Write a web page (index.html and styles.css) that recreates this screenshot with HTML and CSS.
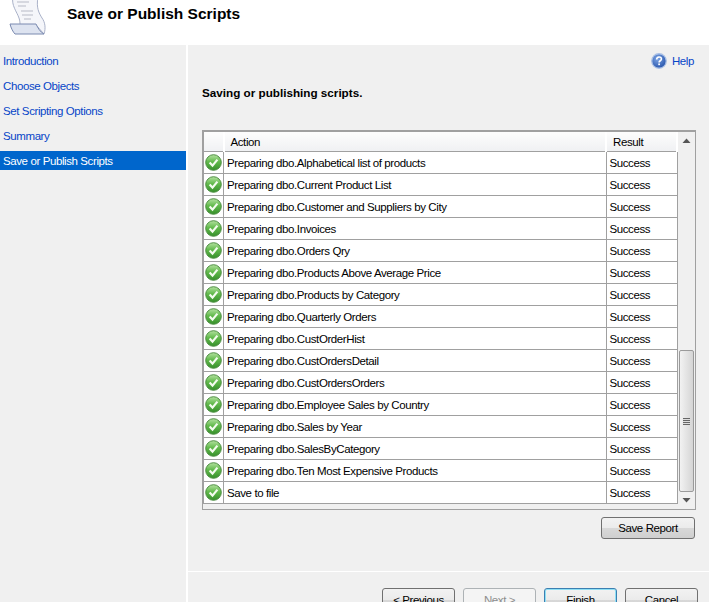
FILE: index.html
```html
<!DOCTYPE html>
<html lang="en">
<head>
  <meta charset="UTF-8">
  <title>Save or Publish Scripts</title>
  <link rel="stylesheet" href="styles.css">
</head>
<body>
  <svg class="defs" width="0" height="0">
    <defs>
      <linearGradient id="okFill" x1="0" y1="0" x2="0" y2="1">
        <stop offset="0" stop-color="#b4e2a0"/>
        <stop offset="0.45" stop-color="#62ba4c"/>
        <stop offset="1" stop-color="#358f2a"/>
      </linearGradient>
      <radialGradient id="helpFill" cx="0.4" cy="0.35" r="0.7">
        <stop offset="0" stop-color="#7ea6e6"/>
        <stop offset="1" stop-color="#2350a8"/>
      </radialGradient>
      <symbol id="ok" viewBox="0 0 17 17">
        <circle cx="8.5" cy="8.5" r="7.8" fill="url(#okFill)" stroke="#4f8f44"/>
        <path d="M4.6 8.6l2.9 3 4.9-6" fill="none" stroke="#f4fbef" stroke-width="2.2"/>
      </symbol>
    </defs>
  </svg>

  <div class="header">
    <svg class="header-icon" width="48" height="36" viewBox="0 0 48 36">
      <path d="M13 -3C11 5 17 12 19 18C20 21 20 23 20 25H36L44 34C46 28 45 22 42 18C39 13 36 8 38 -3Z" fill="#f5f6fa" stroke="#a9b1c8"/>
      <path d="M10 24H36C38 28 40 32 44 34H15C13 32 11 28 10 24Z" fill="#dde3f0" stroke="#7a8ab0"/>
      <path d="M17 2H29M18 6H26M21 11H33M22 15H33M24 19H31" stroke="#cbced8" stroke-width="1.3"/>
    </svg>
    <h1>Save or Publish Scripts</h1>
  </div>

  <div class="body">
    <ul class="nav">
      <li>Introduction</li>
      <li>Choose Objects</li>
      <li>Set Scripting Options</li>
      <li>Summary</li>
      <li class="selected">Save or Publish Scripts</li>
    </ul>

    <div class="main">
      <div class="help">
        <svg width="16" height="16" viewBox="0 0 15 15">
          <circle cx="7.5" cy="7.5" r="6.8" fill="url(#helpFill)" stroke="#a9c0e6" stroke-width="1.2"/>
          <path d="M5.3 6c0-3 4.5-3 4.5-.4 0 1.600-2.200 1.700-2.200 3.200" fill="none" stroke="#fff" stroke-width="1.500"/>
          <rect x="6.800" y="9.800" width="1.600" height="1.600" fill="#fff"/>
        </svg>
        <span>Help</span>
      </div>
      <h2>Saving or publishing scripts.</h2>

      <div class="grid">
        <div class="grid-table">
          <table>
            <thead>
              <tr><th class="col-icon"></th><th class="col-action">Action</th><th class="col-result">Result</th></tr>
            </thead>
            <tbody>
              <tr><td class="cell-icon"><svg width="17" height="17"><use href="#ok"/></svg></td><td>Preparing dbo.Alphabetical list of products</td><td>Success</td></tr>
              <tr><td class="cell-icon"><svg width="17" height="17"><use href="#ok"/></svg></td><td>Preparing dbo.Current Product List</td><td>Success</td></tr>
              <tr><td class="cell-icon"><svg width="17" height="17"><use href="#ok"/></svg></td><td>Preparing dbo.Customer and Suppliers by City</td><td>Success</td></tr>
              <tr><td class="cell-icon"><svg width="17" height="17"><use href="#ok"/></svg></td><td>Preparing dbo.Invoices</td><td>Success</td></tr>
              <tr><td class="cell-icon"><svg width="17" height="17"><use href="#ok"/></svg></td><td>Preparing dbo.Orders Qry</td><td>Success</td></tr>
              <tr><td class="cell-icon"><svg width="17" height="17"><use href="#ok"/></svg></td><td>Preparing dbo.Products Above Average Price</td><td>Success</td></tr>
              <tr><td class="cell-icon"><svg width="17" height="17"><use href="#ok"/></svg></td><td>Preparing dbo.Products by Category</td><td>Success</td></tr>
              <tr><td class="cell-icon"><svg width="17" height="17"><use href="#ok"/></svg></td><td>Preparing dbo.Quarterly Orders</td><td>Success</td></tr>
              <tr><td class="cell-icon"><svg width="17" height="17"><use href="#ok"/></svg></td><td>Preparing dbo.CustOrderHist</td><td>Success</td></tr>
              <tr><td class="cell-icon"><svg width="17" height="17"><use href="#ok"/></svg></td><td>Preparing dbo.CustOrdersDetail</td><td>Success</td></tr>
              <tr><td class="cell-icon"><svg width="17" height="17"><use href="#ok"/></svg></td><td>Preparing dbo.CustOrdersOrders</td><td>Success</td></tr>
              <tr><td class="cell-icon"><svg width="17" height="17"><use href="#ok"/></svg></td><td>Preparing dbo.Employee Sales by Country</td><td>Success</td></tr>
              <tr><td class="cell-icon"><svg width="17" height="17"><use href="#ok"/></svg></td><td>Preparing dbo.Sales by Year</td><td>Success</td></tr>
              <tr><td class="cell-icon"><svg width="17" height="17"><use href="#ok"/></svg></td><td>Preparing dbo.SalesByCategory</td><td>Success</td></tr>
              <tr><td class="cell-icon"><svg width="17" height="17"><use href="#ok"/></svg></td><td>Preparing dbo.Ten Most Expensive Products</td><td>Success</td></tr>
              <tr><td class="cell-icon"><svg width="17" height="17"><use href="#ok"/></svg></td><td>Save to file</td><td>Success</td></tr>
            </tbody>
          </table>
        </div>
        <div class="scrollbar">
          <svg class="arrow" width="9" height="5" viewBox="0 0 9 5"><path d="M0.500 5L4.500 0.500 8.500 5z" fill="#555"/></svg>
          <div class="thumb"><span class="grip"></span></div>
          <svg class="arrow" width="9" height="5" viewBox="0 0 9 5"><path d="M0.500 0L4.500 4.500 8.500 0z" fill="#555"/></svg>
        </div>
      </div>

      <div class="report-row">
        <button class="report-btn">Save Report</button>
      </div>

      <div class="footer">
        <button>&lt; Previous</button>
        <button disabled>Next &gt;</button>
        <button class="default">Finish</button>
        <button>Cancel</button>
      </div>
    </div>
  </div>
</body>
</html>
```
FILE: styles.css
```css
html, body {
  margin: 0;
  height: 602px;
  overflow: hidden;
}
body {
  font-family: "Liberation Sans", Arial, sans-serif;
  font-size: 11.500px;
  letter-spacing: -0.400px;
  background-color: #fff;
  color: #000;
}
.defs {
  position: absolute;
}
.header {
  display: flex;
  align-items: flex-start;
  height: 45px;
  background-color: #fff;
}
.header-icon {
  flex: none;
}
.header h1 {
  margin: 5px 0 0 19px;
  font-size: 15.500px;
  letter-spacing: 0;
  font-weight: bold;
}
.body {
  display: flex;
  height: 557px;
}
.nav {
  width: 186px;
  margin: 0;
  padding: 6px 0 0;
  list-style: none;
  background-color: #f0f0f0;
  color: #0645c8;
}
.nav li {
  height: 19px;
  line-height: 20px;
  margin-bottom: 6px;
  padding-left: 3px;
}
.nav li.selected {
  background-color: #0066cc;
  color: #fff;
}
.main {
  flex: 1;
  margin-left: 2px;
  padding: 0 13px 0 14px;
  background-color: #f0f0f0;
}
.help {
  display: flex;
  justify-content: flex-end;
  align-items: center;
  gap: 5px;
  height: 16px;
  padding: 8px 2px 0 0;
  color: #0645c8;
}
.main h2 {
  margin: 17px 0 0;
  height: 44px;
  font-size: 11.700px;
  letter-spacing: 0;
  font-weight: bold;
}
.grid {
  display: flex;
  height: 377px;
  border: 1px solid #a0a0a0;
  border-top-width: 2px;
  background-color: #f0f0f0;
}
.grid-table {
  width: 475px;
  height: 100%;
  overflow: hidden;
}
table {
  width: 475px;
  table-layout: fixed;
  border-collapse: collapse;
}
th {
  box-sizing: border-box;
  height: 19px;
  padding: 1px 0 0 6px;
  font-weight: normal;
  text-align: left;
  background: linear-gradient(#fdfdfd, #f0f1f3);
  border-bottom: 1px solid #a0a0a0;
  border-right: 2px solid #fff;
}
th.col-icon {
  width: 20px;
  padding: 0;
  border-left: 1px solid #a0a0a0;
}
.col-result {
  width: 71px;
}
td {
  box-sizing: border-box;
  height: 22px;
  padding: 1px 0 0 3px;
  background-color: #fff;
  border-left: 1px solid #a0a0a0;
  border-right: 1px solid #a0a0a0;
  border-bottom: 1px solid #a0a0a0;
  white-space: nowrap;
}
td.cell-icon {
  padding: 0 0 0 1px;
  line-height: 0;
}
.scrollbar {
  flex: 1;
  display: flex;
  flex-direction: column;
  align-items: center;
}
.arrow {
  flex: none;
  margin: 6px 0 7px;
}
.thumb {
  flex: none;
  display: flex;
  align-items: center;
  justify-content: center;
  width: 13px;
  height: 140px;
  margin-top: 200px;
  border: 1px solid #9a9a9a;
  border-radius: 2px;
  background: linear-gradient(90deg, #f2f2f2, #d5d5d5);
}
.grip {
  width: 7px;
  height: 7px;
  background: repeating-linear-gradient(#666 0 1px, #ddd 1px 2px);
}
button {
  width: 94px;
  height: 22px;
  padding: 0;
  font: inherit;
  letter-spacing: inherit;
  color: #000;
  border: 1px solid #707070;
  border-radius: 3px;
  background: linear-gradient(#f2f2f2 0, #ebebeb 50%, #d8d8d8 52%, #cfcfcf 100%);
}
.report-row {
  display: flex;
  justify-content: flex-end;
  padding: 7px 1px 0 0;
}
.footer {
  display: flex;
  justify-content: flex-end;
  gap: 8px;
  margin: 32px -13px 0 -14px;
  padding: 16px 11px 0 0;
  border-top: 1px solid #fff;
}
.footer button {
  width: 73px;
  height: 23px;
}
.footer button:disabled {
  color: #8d8d8d;
  border-color: #adb2b5;
  background: #f4f4f4;
}
.footer button.default {
  border-color: #3c7fb1;
  box-shadow: inset 0 0 0 1px #8ee0f5;
}
```
